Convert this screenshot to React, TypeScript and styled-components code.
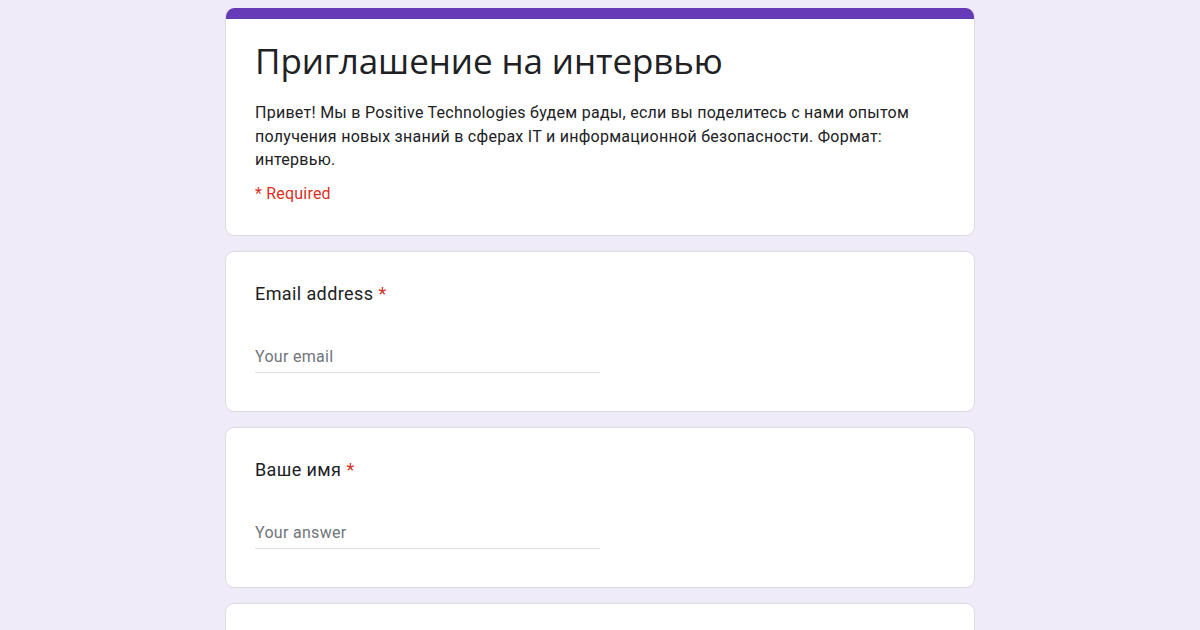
import React from "react";
import styled, { createGlobalStyle } from "styled-components";

const Global = createGlobalStyle`
  html, body { margin: 0; padding: 0; }
  body {
    background: #f0ebf8;
    font-family: Roboto, "Liberation Sans", Arial, sans-serif;
    width: 1200px;
    height: 630px;
    overflow: hidden;
  }
`;

const Page = styled.div`
  display: flex;
  flex-direction: column;
  align-items: center;
  gap: 15px;
  padding-top: 8px;
`;

const Card = styled.div<{ $accent?: boolean }>`
  width: 750px;
  box-sizing: border-box;
  background: #fff;
  border: 1px solid #dadce0;
  border-radius: 9px;
  overflow: hidden;
  ${(p) => (p.$accent ? "border-top: none;" : "")}
`;

const Band = styled.div`
  height: 11px;
  background: #673ab7;
`;

const HeaderBody = styled.div`
  padding: 16px 29px 31px;
`;

const Title = styled.h1`
  margin: 0;
  font-family: "Open Sans", Roboto, sans-serif;
  font-weight: 400;
  font-size: 35px;
  line-height: 52px;
  color: #202124;
  letter-spacing: -0.1px;
`;

const Desc = styled.p`
  margin: 14px 0 0;
  font-size: 16px;
  line-height: 23.5px;
  color: #202124;
  letter-spacing: 0.27px;
`;

const Required = styled.div`
  margin-top: 12px;
  font-size: 16px;
  line-height: 20px;
  color: #d93025;
  letter-spacing: 0.2px;
`;

const QBody = styled.div`
  padding: 31px 29px 37px;
  height: 159px;
  box-sizing: border-box;
`;

const QTitle = styled.div`
  font-size: 18px;
  line-height: 22px;
  color: #202124;
  letter-spacing: 0.4px;
`;

const Star = styled.span`
  color: #d93025;
  margin-left: 5px;
`;

const Input = styled.div`
  margin-top: 42px;
  width: 345px;
  border-bottom: 1px solid #e0e0e0;
  padding-bottom: 5px;
  font-size: 16px;
  line-height: 20px;
  color: #70757a;
  letter-spacing: 0.3px;
`;

const Question = ({ label, placeholder }: { label: string; placeholder: string }) => (
  <Card>
    <QBody>
      <QTitle>
        {label}
        <Star>*</Star>
      </QTitle>
      <Input>{placeholder}</Input>
    </QBody>
  </Card>
);

export default function App() {
  return (
    <>
      <Global />
      <Page>
        <Card $accent>
          <Band />
          <HeaderBody>
            <Title>Приглашение на интервью</Title>
            <Desc>
              Привет! Мы в Positive Technologies будем рады, если вы поделитесь с нами опытом
              <br />
              получения новых знаний в сферах IT и информационной безопасности. Формат:
              <br />
              интервью.
            </Desc>
            <Required>* Required</Required>
          </HeaderBody>
        </Card>
        <Question label="Email address" placeholder="Your email" />
        <Question label="Ваше имя" placeholder="Your answer" />
        <Card>
          <QBody />
        </Card>
      </Page>
    </>
  );
}
